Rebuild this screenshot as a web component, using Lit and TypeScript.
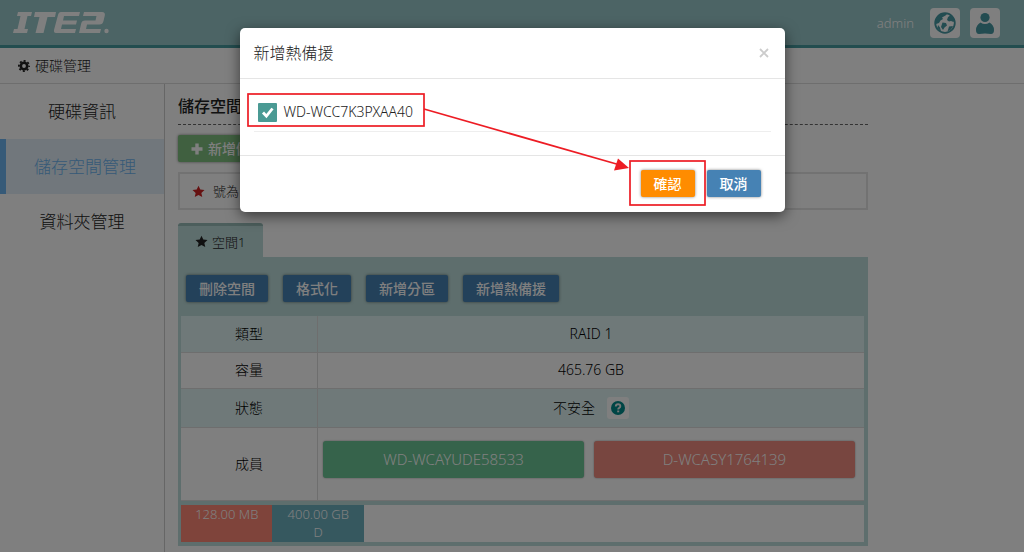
import { LitElement, html, css, svg } from "lit";
import { customElement } from "lit/decorators.js";

const STAR = svg`<path d="M8 .8l2.200 4.800 5.200.6-3.900 3.500 1.100 5.200L8 12.300l-4.600 2.600 1.100-5.200L.6 6.200l5.200-.6z" fill="currentColor"/>`;

const star = (cls = "") => html`<svg class="star ${cls}" viewBox="0 0 16 16" aria-hidden="true">${STAR}</svg>`;

@customElement("app-root")
export class AppRoot extends LitElement {
  static styles = css`
    :host {
      display: block;
      position: relative;
      min-height: 100vh;
      overflow: hidden;
      background: #fff;
      color: #222;
      font: 300 14px/18px "Noto Sans", "Noto Sans CJK TC", sans-serif;
    }
    * { box-sizing: border-box; }
    svg { display: block; flex: none; }
    button { font: inherit; color: inherit; border: 0; margin: 0; cursor: pointer; }
    a { color: inherit; text-decoration: none; }
    .page { display: flex; flex-direction: column; min-height: 100vh; }
    .top {
      display: flex;
      align-items: center;
      height: 48px;
      padding: 0 24px 0 13px;
      background: #98c8ca;
      border-bottom: 3px solid #479a9e;
      color: #fff;
    }
    .logo { width: 97px; height: 24px; }
    .user { margin-left: auto; margin-right: 16px; font-size: 13px; }
    .sq {
      display: grid;
      place-items: center;
      width: 30px;
      height: 30px;
      padding: 0;
      border-radius: 4px;
      background: #fff;
      color: #4698a3;
      margin-left: 10px;
    }
    .user + .sq { margin-left: 0; }
    .crumb {
      display: flex;
      align-items: center;
      gap: 5px;
      height: 36px;
      padding-left: 18px;
      border-bottom: 1px solid #ddd;
    }
    .body { display: flex; flex: 1; }
    nav { flex: none; width: 165px; border-right: 1px solid #ccc; }
    nav a {
      display: flex;
      align-items: center;
      justify-content: center;
      height: 55px;
      font-size: 17px;
    }
    nav a.on { background: #e2eff8; border-left: 6px solid #6cb4f0; color: #6cb4f0; }
    .area { flex: 1; }
    main { width: calc(100% * 10 / 12); padding: 10px 13px; }
    h1 {
      margin: 0 0 10px;
      padding-bottom: 6px;
      border-bottom: 1px dashed #666;
      font-size: 16px;
      line-height: 24px;
      font-weight: 500;
    }
    .btn {
      display: inline-flex;
      align-items: center;
      justify-content: center;
      gap: 5px;
      height: 27px;
      padding: 0 13px;
      border-radius: 2px;
      background: #4682b4;
      color: #fff;
      font-weight: 500;
      box-shadow: 0 0 3px rgba(0, 0, 0, 0.5);
    }
    .add { background: #80c080; }
    .ok { background: #ff8c00; }
    .note {
      display: flex;
      align-items: center;
      gap: 8px;
      height: 38px;
      margin: 10px 0 13px;
      padding: 0 12px;
      border: 2px solid #e4e4e4;
      font-size: 13px;
    }
    .star { width: 13px; height: 13px; }
    .red { color: #c22; }
    .tab {
      display: inline-flex;
      align-items: center;
      gap: 4px;
      height: 34px;
      padding: 0 18px 0 17px;
      border-top: 3px solid #98bcb9;
      border-radius: 3px 3px 0 0;
      background: #bcdcda;
      font-size: 13px;
      vertical-align: top;
    }
    .panel { padding: 18px 4px 4px 3px; background: #bcdcda; }
    .tools { display: flex; flex-wrap: wrap; gap: 15px; padding: 0 5px 14px; }
    table { width: 100%; border-collapse: collapse; background: #fff; color: #000; }
    th, td { height: 36px; padding: 0 5px; border-bottom: 1px solid #ddd; text-align: center; font-weight: 300; }
    th { width: 20%; border-right: 1px solid #ddd; }
    .alt { background: #def3f3; }
    .status { display: flex; align-items: center; justify-content: center; gap: 12px; height: 38px; }
    .help { display: grid; place-items: center; width: 22px; height: 22px; padding: 0; border-radius: 3px; background: #fff; }
    .members { display: flex; gap: 10px; padding: 13px 4px 22px 0; }
    .members button {
      flex: 1;
      height: 37px;
      border-radius: 3px;
      color: #fff;
      background: #6cc696;
      font-size: 15px;
      box-shadow: 0 0 2px rgba(0, 0, 0, 0.4);
    }
    .members .bad { background: #f08c80; }
    .disk { display: flex; height: 37px; margin-top: 4px; background: #fff; color: #fff; font-size: 13px; text-align: center; }
    .seg { background: #ff8876; }
    .seg.b { background: #6cb0be; }
    .shade { position: absolute; inset: 0; background: rgba(0, 0, 0, 0.5); }
    .modal {
      position: absolute;
      top: 28px;
      left: 0;
      right: 0;
      width: 545px;
      max-width: 100%;
      margin: 0 auto;
      border-radius: 5px;
      background: #fff;
      box-shadow: 0 4px 14px rgba(0, 0, 0, 0.55);
    }
    .head { display: flex; align-items: center; justify-content: space-between; height: 51px; padding: 0 14px; border-bottom: 1px solid #e5e5e5; }
    h2 { margin: 0; font-size: 16px; line-height: 24px; font-weight: 300; }
    .x { display: grid; place-items: center; width: 14px; height: 14px; padding: 0; background: none; color: #ccc; }
    .list { padding: 14px 14px 23px; }
    .pick { display: flex; align-items: center; gap: 7px; height: 39px; padding-left: 4px; border-bottom: 1px solid #eee; }
    .pick input {
      appearance: none;
      width: 19px;
      height: 19px;
      margin: 0;
      border-radius: 1px;
      background: #4a9a94 url("data:image/svg+xml,%3Csvg xmlns='http://www.w3.org/2000/svg' viewBox='0 0 19 19'%3E%3Cpath d='M5 9.5l3.4 3.7L14.5 5.500' fill='none' stroke='white' stroke-width='2.800'/%3E%3C/svg%3E");
    }
    .foot { display: flex; justify-content: flex-end; gap: 12px; padding: 14px 24px 15px; border-top: 1px solid #e5e5e5; }
    .marks { position: absolute; top: 0; left: 0; pointer-events: none; }
  `;

  render() {
    return html`
      <div class="page">
        <header class="top">
          <svg class="logo" viewBox="0 0 97 24" fill="#fff" role="img" aria-label="ITE2">
            <path d="M5 1h14l-1 4h-3.500l-3 13H15l-1 4H0l1-4h3.500l3-13H4z" />
            <path d="M22 1h21l-1 5h-7.500l-4 16h-8l4-16H21z" />
            <path d="M48 1h19l-1 4H51l-1 4.500h14l-1 4H49l-1 4.500h15l-1 4H43q-2.500 0-2-3L45 4q.7-3 3-3z" />
            <path d="M71 1h18q3.500 0 2.800 3.500L90.500 10q-.8 3.500-4 3.500H74l-1 4.500h15l-1 4H66l2.200-9.500q.6-3 3.800-3h10.500l1-4.500H70z" />
            <circle cx="93.500" cy="20" r="2.200" />
          </svg>
          <span class="user">admin</span>
          <button class="sq" aria-label="Language">
            <svg width="22" height="22" viewBox="0 0 22 22">
              <circle cx="11" cy="11" r="9.800" fill="none" stroke="currentColor" stroke-width="1.800" />
              <path d="M2 6l5-4.500 7-.5-2.500 2.500L8 5.500 9 7 6.500 8.500 5 11l-3 1zM14 5l3-2 3.500 5-1 2-2.500-1-2 .5L13 8zM8.500 10.500l3.500.5 1 2.500-2.500 2L9 18l-2-3zM4 13l2 2.500 1 4-3.500-3.500zM15 14.500l4-.5-2 3.500-3.500 2z" fill="currentColor" />
            </svg>
          </button>
          <button class="sq" aria-label="Account">
            <svg width="20" height="24" viewBox="0 0 20 24" fill="currentColor">
              <circle cx="10" cy="6.500" r="4.600" />
              <path d="M5.500 11.500q4.500 3 9 0 4.500 2.500 4.500 7.500 0 4-3 4-6-1-12 0-3 0-3-4 0-5 4.500-7.500z" />
            </svg>
          </button>
        </header>
        <div class="crumb">
          <svg width="12" height="12" viewBox="0 0 12 12">
            <circle cx="6" cy="6" r="3.200" fill="none" stroke="currentColor" stroke-width="2.600" />
            <circle cx="6" cy="6" r="5.100" fill="none" stroke="currentColor" stroke-width="1.800" stroke-dasharray="2 2.005" stroke-dashoffset="1" />
          </svg>
          <span>硬碟管理</span>
        </div>
        <div class="body">
          <nav>
            <a href="#info">硬碟資訊</a>
            <a href="#storage" class="on">儲存空間管理</a>
            <a href="#folders">資料夾管理</a>
          </nav>
          <div class="area">
            <main>
              <h1>儲存空間管理</h1>
              <button class="btn add">
                <svg width="12" height="12" viewBox="0 0 12 12"><path d="M6 .5v11M.5 6h11" stroke="currentColor" stroke-width="3.400" /></svg>
                新增儲存空間
              </button>
              <div class="note">${star("red")}<span>號為系統空間</span></div>
              <div class="tab">${star()}<span>空間1</span></div>
              <section class="panel">
                <div class="tools">
                  <button class="btn">刪除空間</button>
                  <button class="btn">格式化</button>
                  <button class="btn">新增分區</button>
                  <button class="btn">新增熱備援</button>
                </div>
                <table>
                  <tr class="alt"><th scope="row">類型</th><td>RAID 1</td></tr>
                  <tr><th scope="row">容量</th><td>465.76 GB</td></tr>
                  <tr class="alt">
                    <th scope="row">狀態</th>
                    <td>
                      <div class="status">
                        <span>不安全</span>
                        <button class="help" aria-label="Help">
                          <svg width="14" height="14" viewBox="0 0 14 14">
                            <circle cx="7" cy="7" r="7" fill="#008b8b" />
                            <path d="M4.800 5.500q0-2.200 2.300-2.200t2.200 1.900q0 1.100-1.100 1.700-1 .5-1 1.500" fill="none" stroke="#eee" stroke-width="1.900" />
                            <path d="M6.200 9.500h2v1.800h-2z" fill="#eee" />
                          </svg>
                        </button>
                      </div>
                    </td>
                  </tr>
                  <tr>
                    <th scope="row">成員</th>
                    <td>
                      <div class="members">
                        <button>WD-WCAYUDE58533</button>
                        <button class="bad">D-WCASY1764139</button>
                      </div>
                    </td>
                  </tr>
                </table>
                <div class="disk">
                  ${[
                    { cls: "seg", label: "128.00 MB", name: "", share: 13.4 },
                    { cls: "seg b", label: "400.00 GB", name: "D", share: 13.4 },
                  ].map((s) => html`<div class=${s.cls} style="width:${s.share}%">${s.label}<br />${s.name}</div>`)}
                </div>
              </section>
            </main>
          </div>
        </div>
      </div>
      <div class="shade"></div>
      <div class="modal" role="dialog" aria-labelledby="title">
        <div class="head">
          <h2 id="title">新增熱備援</h2>
          <button class="x" aria-label="Close">
            <svg width="10" height="10" viewBox="0 0 10 10"><path d="M1 1l8 8M9 1l-8 8" stroke="currentColor" stroke-width="1.800" /></svg>
          </button>
        </div>
        <div class="list">
          <div class="pick">
            <input id="disk" type="checkbox" checked />
            <label for="disk">WD-WCC7K3PXAA40</label>
          </div>
        </div>
        <div class="foot">
          <button class="btn ok">確認</button>
          <button class="btn">取消</button>
        </div>
        <svg class="marks" width="545" height="184" viewBox="0 0 545 184" fill="none" stroke="#ed1c24" stroke-width="1.700">
          <rect x="8" y="66" width="176" height="32" />
          <rect x="390" y="133" width="75" height="44" />
          <path d="M184 81L380 137" />
          <path d="M378 130.500L389 140l-15 2.500z" fill="#ed1c24" stroke="none" />
        </svg>
      </div>
    `;
  }
}
